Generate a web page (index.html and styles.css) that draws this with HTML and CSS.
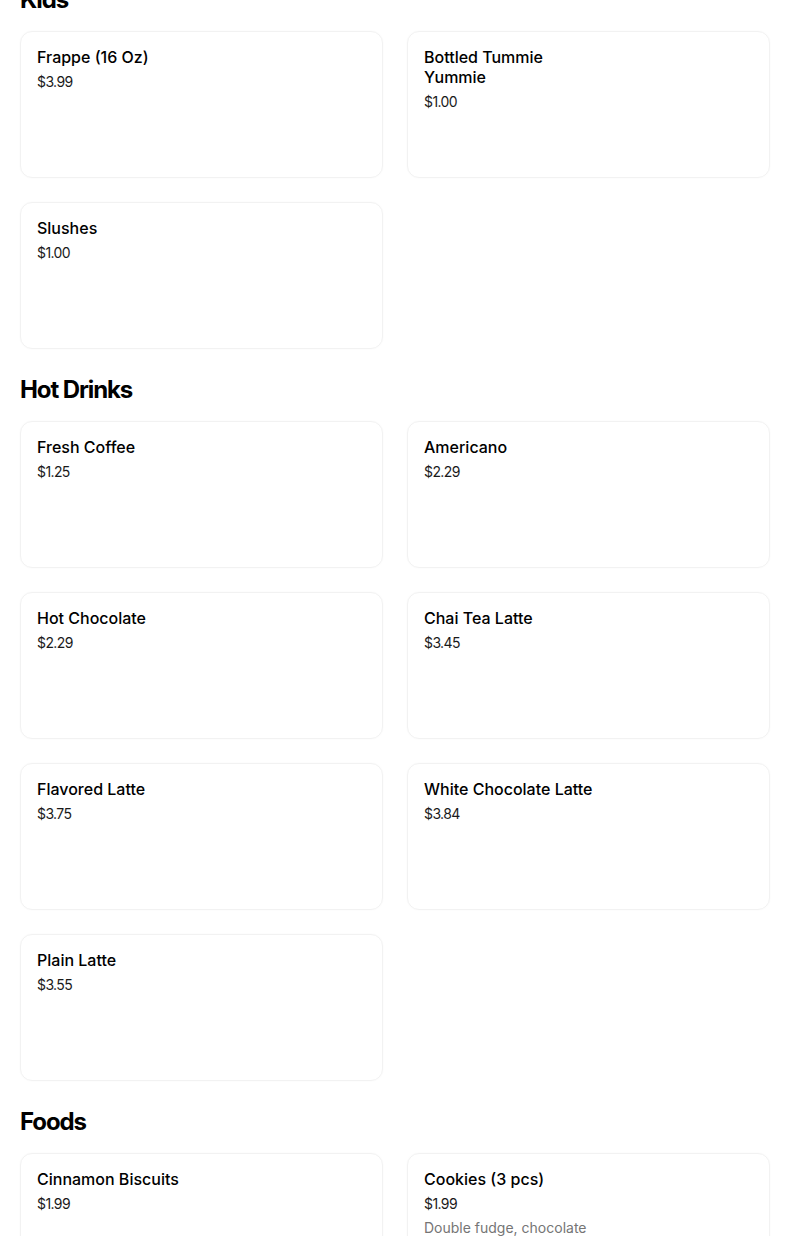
FILE: index.html
```html
<!DOCTYPE html>
<html lang="en">
<head>
<meta charset="utf-8">
<title>Menu</title>
<link rel="stylesheet" href="styles.css">
</head>
<body>
<main class="menu">
  <section class="section">
    <h2 class="section-title">Kids</h2>
    <div class="grid">
      <div class="card"><div class="name">Frappe (16 Oz)</div><div class="price">$3.99</div></div>
      <div class="card"><div class="name narrow">Bottled Tummie Yummie</div><div class="price">$1.00</div></div>
      <div class="card"><div class="name">Slushes</div><div class="price">$1.00</div></div>
    </div>
  </section>
  <section class="section">
    <h2 class="section-title">Hot Drinks</h2>
    <div class="grid">
      <div class="card"><div class="name">Fresh Coffee</div><div class="price">$1.25</div></div>
      <div class="card"><div class="name">Americano</div><div class="price">$2.29</div></div>
      <div class="card"><div class="name">Hot Chocolate</div><div class="price">$2.29</div></div>
      <div class="card"><div class="name">Chai Tea Latte</div><div class="price">$3.45</div></div>
      <div class="card"><div class="name">Flavored Latte</div><div class="price">$3.75</div></div>
      <div class="card"><div class="name">White Chocolate Latte</div><div class="price">$3.84</div></div>
      <div class="card"><div class="name">Plain Latte</div><div class="price">$3.55</div></div>
    </div>
  </section>
  <section class="section">
    <h2 class="section-title">Foods</h2>
    <div class="grid">
      <div class="card"><div class="name">Cinnamon Biscuits</div><div class="price">$1.99</div></div>
      <div class="card"><div class="name">Cookies (3 pcs)</div><div class="price">$1.99</div><div class="desc">Double fudge, chocolate</div></div>
    </div>
  </section>
</main>
</body>
</html>
```
FILE: styles.css
```css
html, body {
  margin: 0;
  padding: 0;
  background: #ffffff;
}
body {
  font-family: Inter, "Liberation Sans", Arial, sans-serif;
  color: #000000;
  overflow: hidden;
}
.menu {
  width: 750px;
  margin: -16px 0 0 20px;
  display: flex;
  flex-direction: column;
  gap: 25px;
}
.section {
  display: flex;
  flex-direction: column;
}
.section-title {
  margin: 0 0 15px 0;
  font-size: 24px;
  line-height: 32px;
  font-weight: 700;
  letter-spacing: -1.1px;
}
.grid {
  display: grid;
  grid-template-columns: 1fr 1fr;
  gap: 24px;
}
.card {
  box-sizing: border-box;
  min-height: 147px;
  padding: 15px 16px;
  border: 1px solid #f2f2f2;
  border-radius: 12px;
  box-shadow: 0 0 2px rgba(0,0,0,0.03);
}
.name {
  font-size: 16px;
  line-height: 20px;
  font-weight: 500;
  letter-spacing: 0;
}
.name.narrow {
  max-width: 140px;
}
.price {
  margin-top: 5px;
  font-size: 14px;
  line-height: 20px;
  font-weight: 400;
  color: #1a1a1a;
  letter-spacing: -0.6px;
}
.desc {
  margin-top: 4px;
  font-size: 14px;
  line-height: 20px;
  color: #757575;
}
```
